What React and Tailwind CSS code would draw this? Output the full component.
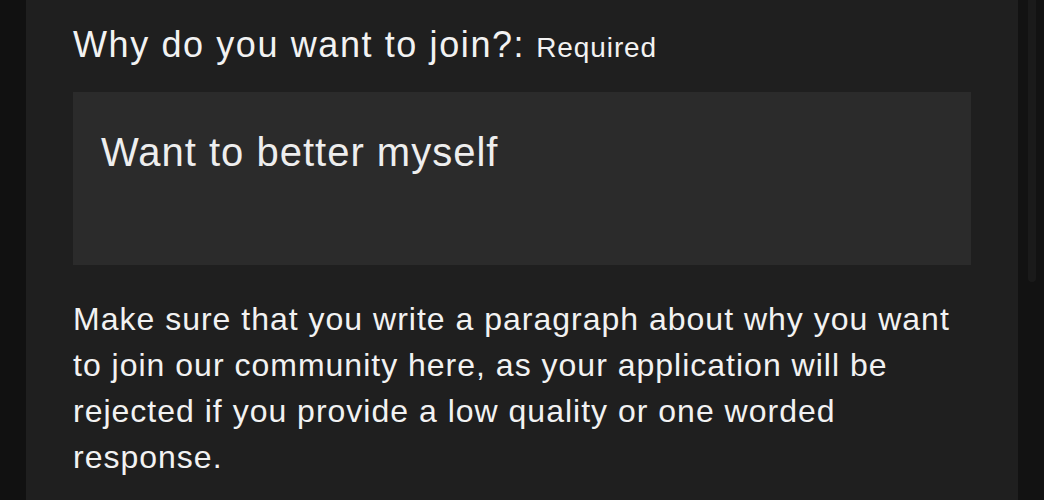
export default function App() {
  return (
    <div className="w-[1044px] h-[500px] overflow-hidden bg-[#121212] flex" style={{ fontFamily: '"Liberation Sans", Arial, sans-serif' }}>
      <div className="w-[26px] shrink-0 bg-[#111111]" />
      <div className="w-[992px] shrink-0 bg-[#1f1f1f] pl-[47px] pr-[47px] pt-[25px]">
        <div className="flex items-baseline text-[#f2f2f2] h-[40px]">
          <span className="text-[36px] leading-[40px] tracking-[1.6px]">Why do you want to join?:</span>
          <span className="text-[28px] ml-[11px] tracking-[0.9px]">Required</span>
        </div>
        <div className="mt-[27px] h-[173px] bg-[#2b2b2b] pl-[28px] pt-[36px]">
          <span className="block text-[40px] leading-[48px] tracking-[1px] text-[#eeeeee]">Want to better myself</span>
        </div>
        <p className="mt-[31px] text-[32px] leading-[46px] tracking-[1px] text-[#f2f2f2]">
          Make sure that you write a paragraph about why you want to join our community here, as your application will be rejected if you provide a low quality or one worded response.
        </p>
      </div>
      <div className="flex-1 bg-[#121212] relative">
        <div className="absolute left-[10px] top-0 w-[8px] h-[282px] rounded-b-full bg-[#1a1a1a]" />
      </div>
    </div>
  );
}
